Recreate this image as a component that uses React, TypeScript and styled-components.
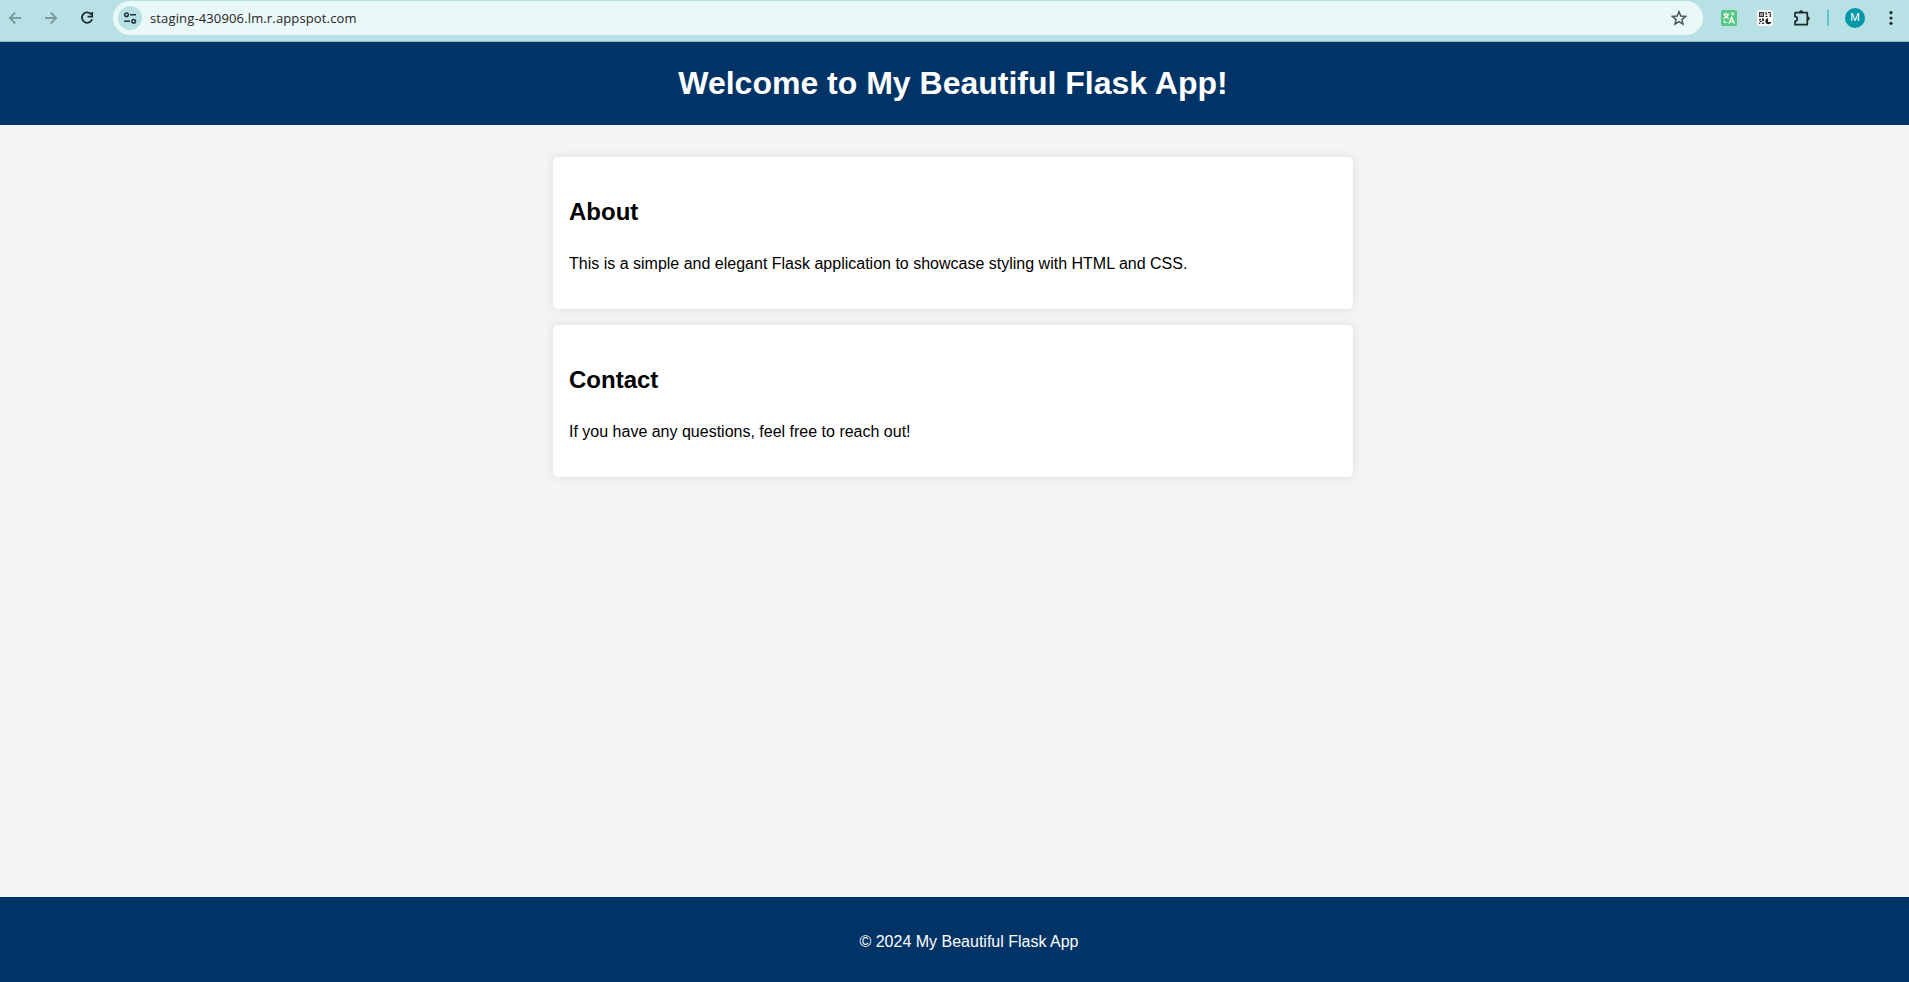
import React from "react";
import styled, { createGlobalStyle } from "styled-components";

const GlobalStyle = createGlobalStyle`
  html, body { margin: 0; padding: 0; height: 982px; overflow: hidden; }
  body {
    font-family: "Liberation Sans", Arial, sans-serif;
    line-height: 1.6;
    background: #f4f4f4;
    color: #000;
  }
`;

const Window = styled.div`
  display: flex;
  flex-direction: column;
  height: 982px;
  overflow: hidden;
`;

const Toolbar = styled.div`
  box-sizing: border-box;
  flex: none;
  display: flex;
  align-items: flex-start;
  height: 42px;
  padding-top: 1px;
  background: #b7e1e4;
  border-bottom: 1px solid #8fbcc4;
`;

const NavIcons = styled.div`
  display: flex;
  align-items: center;
  gap: 20px;
  width: 107px;
  height: 34px;
  padding-left: 7px;
  box-sizing: border-box;
  flex: none;
`;

const Icon = styled.svg`
  display: block;
  flex: none;
`;

const AddressBar = styled.div`
  box-sizing: border-box;
  width: 1590px;
  margin-left: 6px;
  height: 34px;
  flex: none;
  display: flex;
  align-items: center;
  border-radius: 17px;
  padding: 0 16px 0 5px;
  background: #ebf8f8;
`;

const SiteInfo = styled.div`
  display: flex;
  align-items: center;
  justify-content: center;
  width: 24px;
  height: 24px;
  border-radius: 50%;
  background: #b7e1e4;
`;

const Url = styled.span`
  flex: 1;
  margin-left: 8px;
  font: 13px/20px "Open Sans", "Noto Sans", sans-serif;
  letter-spacing: 0.14px;
  color: #1f2426;
`;

const Extensions = styled.div`
  display: flex;
  align-items: center;
  height: 34px;
  padding-left: 17px;
`;

const ExtensionIcon = styled(Icon)<{ $gap?: number }>`
  margin-left: ${({ $gap = 0 }) => $gap}px;
`;

const Divider = styled.div`
  width: 2px;
  height: 16px;
  margin: 0 16px;
  background: #5fc3cb;
`;

const Avatar = styled.div`
  width: 20px;
  height: 20px;
  margin-right: 18px;
  border-radius: 50%;
  background: #0097a7;
  color: #fff;
  font: 400 11px/20px Roboto, sans-serif;
  text-align: center;
`;

const Page = styled.div`
  flex: 1;
  width: 1906px;
  display: flex;
  flex-direction: column;
  min-height: 0;
`;

const Header = styled.header`
  width: 1909px;
  box-sizing: border-box;
  padding: 16px 3px 16px 0;
  background: #003366;
  color: #fff;
  text-align: center;
`;

const Title = styled.h1`
  margin: 0;
  font-size: 32px;
`;

const Main = styled.main`
  flex: 1;
  width: 800px;
  margin: 32px auto 0;
`;

const Card = styled.section`
  padding: 16px;
  margin-bottom: 16px;
  border-radius: 5px;
  background: #fff;
  box-shadow: 0 0 10px rgba(0, 0, 0, 0.1);

  h2 { margin: 19.92px 0; font-size: 24px; }
  p { margin: 16px 0; }
`;

const Footer = styled.footer`
  box-sizing: border-box;
  flex: none;
  width: 1909px;
  height: 85px;
  padding: 32px 0 0 29px;
  background: #003366;
  color: #fff;
  text-align: center;
`;

export default function App() {
  return (
    <Window>
      <GlobalStyle />
      <Toolbar>
        <NavIcons>
          <Icon width="16" height="16" viewBox="0 0 16 16" fill="none" stroke="#7b9a9f" strokeWidth="1.8">
            <path d="M14 8H3M8.3 2.5 2.8 8l5.5 5.5" />
          </Icon>
          <Icon width="16" height="16" viewBox="0 0 16 16" fill="none" stroke="#7b9a9f" strokeWidth="1.8">
            <path d="M2 8h11M7.7 2.5 13.2 8l-5.5 5.5" />
          </Icon>
          <Icon width="16" height="16" viewBox="0 0 16 16" fill="none" stroke="#1f2a2d" strokeWidth="1.8">
            <path d="M12.3 4.4A5.2 5.2 0 1 0 13.1 9.2M13.2 2v4.6H8.6" />
          </Icon>
        </NavIcons>
        <AddressBar>
          <SiteInfo>
            <Icon width="14" height="14" viewBox="0 0 14 14" fill="none" stroke="#263236" strokeWidth="1.5">
              <circle cx="3.5" cy="3.7" r="1.8" />
              <path d="M7 3.7h6M1 10.3h6" />
              <circle cx="10.7" cy="10.3" r="1.8" />
            </Icon>
          </SiteInfo>
          <Url>staging-430906.lm.r.appspot.com</Url>
          <Icon width="16" height="16" viewBox="0 0 16 16" fill="none" stroke="#4a5558" strokeWidth="1.5">
            <path d="m8 1.8 1.8 4.3 4.7.4-3.6 3.1 1.1 4.6L8 11.7l-4 2.5 1.1-4.6-3.6-3.1 4.7-.4Z" />
          </Icon>
        </AddressBar>
        <Extensions>
          <ExtensionIcon width="18" height="18" viewBox="0 0 18 18">
            <rect x="1" y="1" width="16" height="16" rx="2" fill="#57c785" />
            <path d="M3 5.2h6.4M6.2 3.4v1.8M4.2 5.2q1 3.2 4.6 4.3M8.3 5.2Q7.3 8.5 3.4 9.6" fill="none" stroke="#fff" strokeWidth="1.1" />
            <path d="m9 14.8 2.7-6.6 2.7 6.6M10 12.6h3.4M4.4 11.5v2h2.3M11.2 4.4h2v2" fill="none" stroke="#fff" strokeWidth="1.2" />
          </ExtensionIcon>
          <ExtensionIcon $gap={18} width="18" height="18" viewBox="0 0 18 18">
            <rect x="1" y="1" width="16" height="16" rx="2" fill="#f7f7f7" />
            <path d="M3 3h5v5H3zM4.3 4.3v2.4h2.4V4.3zM5 5h1v1H5zM9.5 3h1.3v3H9.5zM12 3h3v1.3h-3zM13.7 5H15v3h-1.3zM9.5 7h2v1h-2zM3 10h2v1.5H3zM6 9.5h2V12H6zM4 12h2v1H4zM3 13.5h1.3V15H3zM6 13.5h2V15H6z" fill="#333" fillRule="evenodd" />
            <path d="M12 9.3a3 3 0 1 0 3.3 3.7H12Z" fill="#222" />
          </ExtensionIcon>
          <ExtensionIcon $gap={19} width="18" height="18" viewBox="0 0 18 18" fill="none" stroke="#1f2a2d" strokeWidth="1.7">
            <path d="M2 3.7h12.3v12H2v-3.5a2.3 2.3 0 0 0 0-4.6Z" strokeLinejoin="round" />
            <path d="M6.3 3.5a1.8 1.8 0 0 1 3.6 0M14.5 7.7a1.8 1.8 0 0 1 0 3.6" fill="#1f2a2d" strokeWidth="1" />
          </ExtensionIcon>
          <Divider />
          <Avatar>M</Avatar>
          <Icon width="16" height="16" viewBox="0 0 16 16" fill="#1f2a2d">
            <circle cx="8" cy="2.7" r="1.6" />
            <circle cx="8" cy="8" r="1.6" />
            <circle cx="8" cy="13.3" r="1.6" />
          </Icon>
        </Extensions>
      </Toolbar>
      <Page>
        <Header><Title>Welcome to My Beautiful Flask App!</Title></Header>
        <Main>
          <Card>
            <h2>About</h2>
            <p>This is a simple and elegant Flask application to showcase styling with HTML and CSS.</p>
          </Card>
          <Card>
            <h2>Contact</h2>
            <p>If you have any questions, feel free to reach out!</p>
          </Card>
        </Main>
        <Footer>© 2024 My Beautiful Flask App</Footer>
      </Page>
    </Window>
  );
}
